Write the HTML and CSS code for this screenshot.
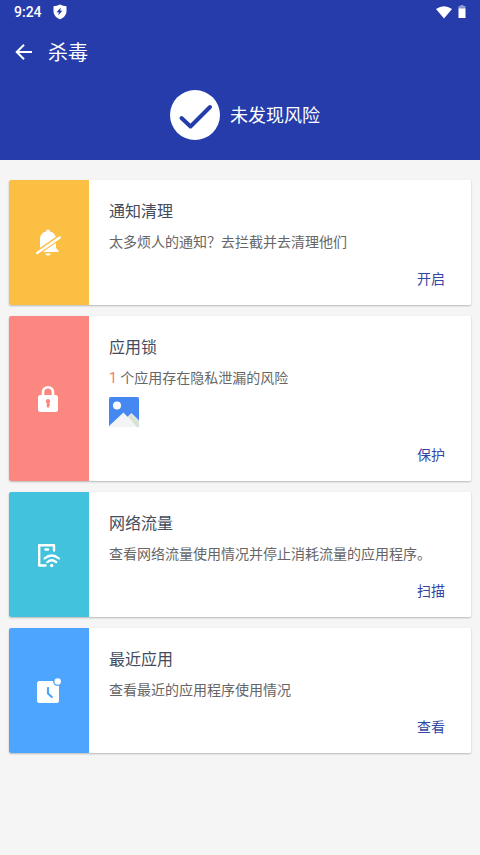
FILE: index.html
```html
<!DOCTYPE html>
<html lang="zh-CN">
<head>
<meta charset="utf-8">
<meta name="viewport" content="width=device-width, initial-scale=1">
<title>杀毒</title>
<link rel="stylesheet" href="styles.css">
</head>
<body>
<header class="header">
  <div class="status-bar">
    <span class="clock">9:24</span>
    <svg class="shield" width="14" height="16" viewBox="0 0 14 16" aria-hidden="true"><path fill="#fff" d="M7 .5 Q10 2 13.500 2.200 V7 C13.500 11 10.500 14 7 15.200 C3.500 14 .5 11 .5 7 V2.200 Q4 2 7 .5Z"/><path fill="#263cab" d="M7.800 3.500 L3.500 8.300 H5.800 L5.300 11.200 L9.500 6.800 H7.200Z"/></svg>
    <svg class="wifi" width="16" height="13" viewBox="0 0 16 13" aria-hidden="true"><path fill="#fff" d="M0 3 Q8 -2.600 16 3 L8 12.500Z"/></svg>
    <svg width="8" height="14" viewBox="0 0 8 14" aria-hidden="true"><path fill="#8b98d3" d="M2.500 0 H5.500 V1 H7.500 V4 H.5 V1 H2.500Z"/><path fill="#fff" d="M.5 3.500 H7.500 V13 H.5Z"/></svg>
  </div>
  <div class="app-bar">
    <button class="back" type="button" aria-label="返回"><svg width="18" height="18" viewBox="0 0 18 18"><path fill="none" stroke="#fff" stroke-width="2" d="M17 9 H2.500 M9 1.700 L1.700 9 L9 16.300"/></svg></button>
    <h1 class="title">杀毒</h1>
  </div>
  <div class="result">
    <svg width="50" height="50" viewBox="0 0 50 50" aria-hidden="true"><circle cx="25" cy="25" r="25" fill="#fff"/><path fill="none" stroke="#263cab" stroke-width="4" stroke-linecap="round" stroke-linejoin="round" d="M11.500 28 L20.500 36.500 L40 17"/></svg>
    <p class="result-text">未发现风险</p>
  </div>
</header>
<main class="cards">
  <section class="card">
    <div class="tile yellow">
      <svg width="28" height="28" viewBox="1 0 28 28" aria-hidden="true"><path fill="#fff" d="M14 .5 C15.300 .5 16 1.300 16 2.500 C20 3.500 22 6.500 22 10.500 V19 L24.500 21.500 V23 H3.500 V21.500 L6 19 V10.500 C6 6.500 8 3.500 12 2.500 C12 1.300 12.700 .5 14 .5Z M11 24.500 H17 Q16.500 26.500 14 26.500 Q11.500 26.500 11 24.500Z"/><path stroke="#fbbf43" stroke-width="5" d="M0 26 L29 6"/><path stroke="#fff" stroke-width="2.400" stroke-linecap="round" d="M3.200 24 L25.700 8.500"/></svg>
    </div>
    <div class="body">
      <h2 class="name">通知清理</h2>
      <p class="desc">太多烦人的通知？去拦截并去清理他们</p>
      <button class="action" type="button">开启</button>
    </div>
  </section>
  <section class="card">
    <div class="tile red">
      <svg width="28" height="28" viewBox="1 0 28 28" aria-hidden="true"><path fill="none" stroke="#fff" stroke-width="2.600" d="M9 12 V7.500 C9 0.500 19 0.500 19 7.500 V12"/><rect x="4" y="10" width="20" height="17" rx="2.500" fill="#fff"/><path fill="#fc8781" d="M14 14 A2.300 2.300 0 0 1 15.200 18.200 V19 H16 V20.500 H15.200 V22.500 H12.800 V18.200 A2.300 2.300 0 0 1 14 14Z"/></svg>
    </div>
    <div class="body">
      <h2 class="name">应用锁</h2>
      <p class="desc"><span class="count">1</span> 个应用存在隐私泄漏的风险</p>
      <svg class="photo" width="30" height="30" viewBox="0 0 30 30" role="img" aria-label="图库"><rect width="30" height="30" rx="1.500" fill="#4688f1"/><circle cx="8" cy="8.500" r="4" fill="#fff"/><path fill="#e2e5e2" d="M17 21 L22.500 16 L30 23.500 V28.500 Q30 30 28.500 30 H21Z"/><path fill="#d5e3cf" d="M20 19 L22 18.500 L30 26.500 V29 L28 30Z"/><path fill="#f3f4f5" d="M0 29 L14.500 15.500 L28 30 H1.500 Q0 30 0 29Z"/></svg>
      <button class="action" type="button">保护</button>
    </div>
  </section>
  <section class="card">
    <div class="tile teal">
      <svg width="28" height="28" viewBox="1 0 28 28" aria-hidden="true"><path fill="none" stroke="#fff" stroke-width="2.400" stroke-linecap="round" stroke-linejoin="round" d="M20 9.500 V4.200 H5.200 V24.500 H11.500"/><path stroke="#fff" stroke-width="2.400" stroke-linecap="round" d="M11.500 8.500 H14"/><path fill="none" stroke="#fff" stroke-width="2.200" stroke-linecap="round" d="M10.500 17.500 Q17.500 11.500 25 17.500 M13.200 21.200 Q17.600 17.300 22.200 21.200"/><circle cx="17.700" cy="24.500" r="1.700" fill="#fff"/></svg>
    </div>
    <div class="body">
      <h2 class="name">网络流量</h2>
      <p class="desc">查看网络流量使用情况并停止消耗流量的应用程序。</p>
      <button class="action" type="button">扫描</button>
    </div>
  </section>
  <section class="card">
    <div class="tile blue">
      <svg width="28" height="28" viewBox="1 0 28 28" aria-hidden="true"><rect x="3" y="4" width="22" height="22" rx="2.500" fill="#fff"/><circle cx="23.700" cy="4.500" r="4.600" fill="#4da5ff"/><circle cx="23.700" cy="4.500" r="3.200" fill="#fff"/><path fill="none" stroke="#4da5ff" stroke-width="2.200" stroke-linecap="round" stroke-linejoin="round" d="M14 11 V16.500 L17.800 20"/></svg>
    </div>
    <div class="body">
      <h2 class="name">最近应用</h2>
      <p class="desc">查看最近的应用程序使用情况</p>
      <button class="action" type="button">查看</button>
    </div>
  </section>
</main>
</body>
</html>
```

FILE: styles.css
```css
* {
  box-sizing: border-box;
}

body {
  margin: 0;
  background: #f5f5f5;
  font-family: Roboto, "Noto Sans CJK SC", sans-serif;
}

h1, h2, p {
  margin: 0;
  font-weight: 400;
}

button {
  border: 0;
  padding: 0;
  background: none;
  font: inherit;
  cursor: pointer;
}

svg {
  display: block;
}

.header {
  background: #263cab;
  color: #fff;
  padding-bottom: 20px;
}

.status-bar {
  display: flex;
  align-items: center;
  height: 24px;
  padding: 0 14px;
}

.clock {
  font-size: 14px;
  font-weight: 500;
}

.shield {
  margin-left: 11px;
}

.wifi {
  margin: 0 6px 0 auto;
}

.app-bar {
  display: flex;
  align-items: center;
  gap: 15px;
  height: 56px;
  padding: 0 15px;
}

.title {
  padding-top: 2px;
  font-size: 20px;
  line-height: 28px;
}

.result {
  display: flex;
  align-items: center;
  justify-content: center;
  gap: 10px;
  padding-top: 10px;
  margin-left: 10px;
}

.result-text {
  padding-top: 2px;
  font-size: 18px;
  line-height: 26px;
}

.cards {
  display: grid;
  gap: 11px;
  padding: 20px 9px;
}

.card {
  display: flex;
  overflow: hidden;
  border-radius: 2px;
  background: #fff;
  box-shadow: 0 1px 2px rgba(0, 0, 0, 0.25);
}

.tile {
  display: flex;
  flex: 0 0 80px;
  align-items: center;
  justify-content: center;
}

.yellow {
  background: #fbbf43;
}

.red {
  background: #fc8781;
}

.teal {
  background: #42c2dc;
}

.blue {
  background: #4da5ff;
}

.body {
  display: flex;
  flex: 1;
  flex-direction: column;
  gap: 9px;
  padding: 21px 26px 16px 20px;
}

.name {
  color: #434b5c;
  font-size: 16px;
  line-height: 22px;
}

.desc {
  color: #666;
  font-size: 14px;
  line-height: 20px;
}

.count {
  color: #f5796c;
}

.photo {
  margin-bottom: 1px;
}

.action {
  align-self: flex-end;
  margin-top: 8px;
  color: #3446a5;
  font-size: 14px;
  line-height: 20px;
}
```
